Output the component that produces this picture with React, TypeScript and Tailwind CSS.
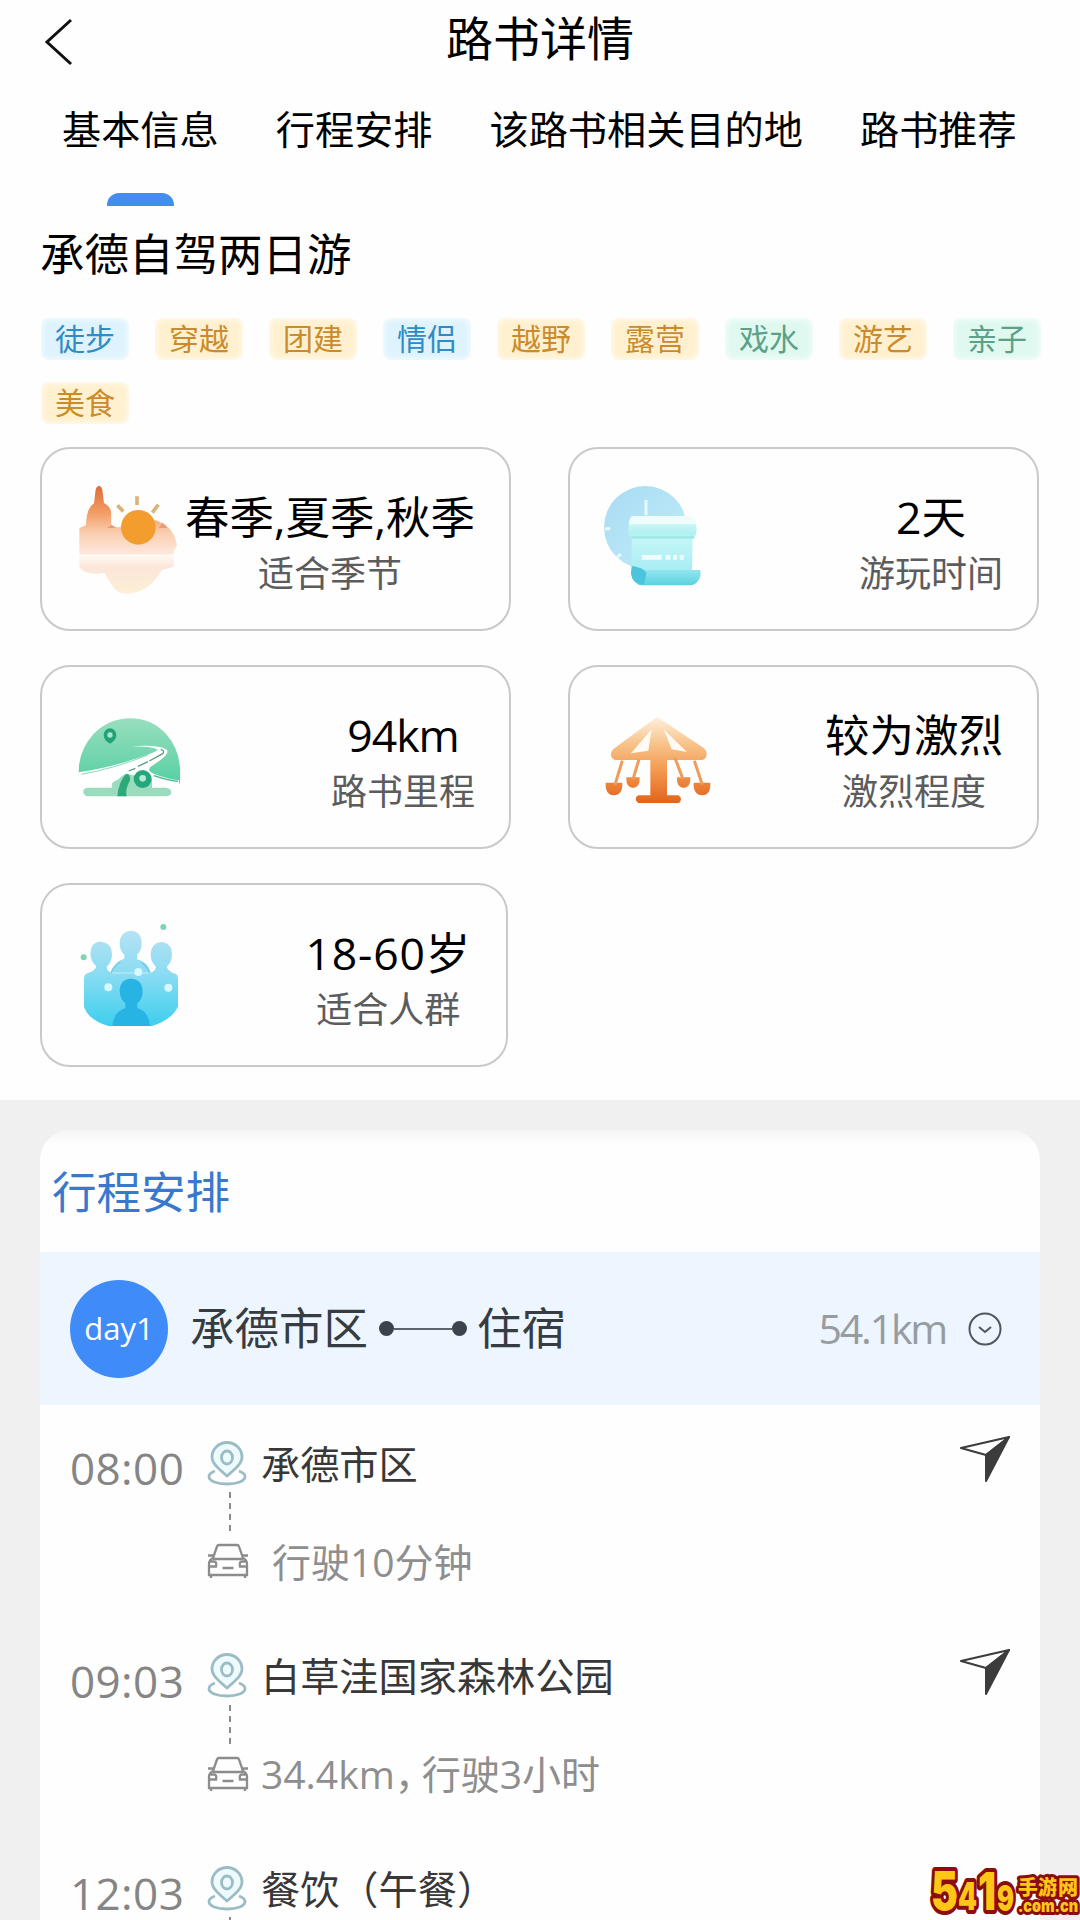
import React from "react";

const tabs = ["基本信息", "行程安排", "该路书相关目的地", "路书推荐"];

const tagColors = {
  blue: "bg-[#def3fd] text-[#2f8cc4]",
  orange: "bg-[#fff1cf] text-[#cb8b2c]",
  green: "bg-[#e0f9f0] text-[#5da088]",
};

const tags: { name: string; color: keyof typeof tagColors }[] = [
  { name: "徒步", color: "blue" },
  { name: "穿越", color: "orange" },
  { name: "团建", color: "orange" },
  { name: "情侣", color: "blue" },
  { name: "越野", color: "orange" },
  { name: "露营", color: "orange" },
  { name: "戏水", color: "green" },
  { name: "游艺", color: "orange" },
  { name: "亲子", color: "green" },
  { name: "美食", color: "orange" },
];

const SeasonIcon = () => (
  <svg width="100" height="112" viewBox="140 130 300 336">
    <defs>
      <linearGradient id="season" x1="0" y1="130" x2="0" y2="465" gradientUnits="userSpaceOnUse">
        <stop offset="0" stopColor="#dc6a35" />
        <stop offset="0.25" stopColor="#f29b62" />
        <stop offset="0.45" stopColor="#fad0b4" />
        <stop offset="0.62" stopColor="#fde6da" />
        <stop offset="0.64" stopColor="#fffaf2" />
        <stop offset="0.74" stopColor="#fbe6d8" />
        <stop offset="1" stopColor="#fdf0d6" />
      </linearGradient>
    </defs>
    <path
      d="M206 135q10 2 11 20l4 32q20 10 22 30v42h20l30-10 85-10 28 14q30 26 34 60l-10 20v45l-35 10q-30 50-65 62-60 24-85-15l-22-38q-60 8-76-18V262l20-8q0-50 24-66l4-34q1-17 11-19z"
      fill="url(#season)"
    />
    <path d="M243 200h30v60h-20q-10-12-10-28z" fill="#fffdfa" opacity="0.75" />
    <circle cx="324" cy="260" r="52" fill="#f29d2e" />
    <g stroke="#d9b577" strokeWidth="11">
      <path d="M320 167v26M384 192l-18 24M261 194l18 18" />
    </g>
    <path d="M385 262l12-16 14 16z" fill="#ea9a76" />
    <path d="M230 262l14-10 14 10z" fill="#ea9a76" />
  </svg>
);

const DurationIcon = () => (
  <svg width="100" height="104" viewBox="130 130 300 312">
    <defs>
      <linearGradient id="clock" x1="0" y1="0" x2="1" y2="1">
        <stop offset="0" stopColor="#a9daf3" />
        <stop offset="1" stopColor="#c0eff8" />
      </linearGradient>
      <linearGradient id="paper" x1="0" y1="0" x2="0" y2="1">
        <stop offset="0" stopColor="#e6fbfb" />
        <stop offset="0.3" stopColor="#b2f0f0" />
        <stop offset="0.42" stopColor="#c4f6f7" />
        <stop offset="1" stopColor="#a6ecf4" />
      </linearGradient>
      <linearGradient id="roll" x1="0" y1="0" x2="0" y2="1">
        <stop offset="0" stopColor="#b0f0f8" />
        <stop offset="1" stopColor="#5cd2e0" />
      </linearGradient>
    </defs>
    <circle cx="257" cy="260" r="124" fill="url(#clock)" />
    <path d="M259 178v46M136 264h16M172 350l12-10" stroke="#e8f9fd" strokeWidth="9" />
    <path d="M218 226h172q20 10 21 40 0 20-12 30l-2 100H216V296q-10-12-10-28 0-30 12-42z" fill="url(#paper)" />
    <path d="M218 226h172q14 6 18 24H207q2-18 11-24z" fill="#effcfc" />
    <path d="M214 290h190" stroke="#9be8e4" strokeWidth="7" />
    <path d="M246 350h60M318 350h14M340 350h12M360 350h12" stroke="#eefeff" strokeWidth="14" />
    <path d="M214 362q10 26 44 26h164q4 20-8 34-8 12-24 12H250q-30 0-36-34z" fill="url(#roll)" />
    <path d="M218 376q30 4 42 20-2 20-8 36-34-2-38-34z" fill="#4cc4dc" />
  </svg>
);

const RoadIcon = () => (
  <svg width="104" height="80" viewBox="144 168 312 240">
    <defs>
      <linearGradient id="hill" x1="0" y1="0" x2="0" y2="1">
        <stop offset="0" stopColor="#98dfbe" />
        <stop offset="1" stopColor="#57cfa2" />
      </linearGradient>
    </defs>
    <path d="M147 344q-6-70 44-126 48-46 110-46 64 0 108 48 50 56 40 148z" fill="url(#hill)" />
    <path d="M147 334q90-14 160-38 70-22 76-30-20-10-80-10 90-6 108 12 10 12-50 50-10 12 10 20 40 16 76 20v16H147z" fill="#fff" />
    <path d="M154 340q100-18 200-58" stroke="#8bd9ba" strokeWidth="3" fill="none" />
    <path d="M296 330l20-8M324 316l30-14M358 300l40-22q8-8-6-13" stroke="#5b9a82" strokeWidth="4" fill="none" />
    <path d="M372 344q40 14 72 17" stroke="#3fb88a" strokeWidth="4" fill="none" />
    <path d="M172 380h74q-6-18 18-24 20-24 42-14l60 14v24h44q14 4 14 14t-14 12H172q-12-4-12-14t12-12z" fill="#9bdcbe" />
    <path d="M288 338q14 0 12 20-16 30-10 48h-28q4-44 26-68z" fill="#2ea97a" />
    <path d="M240 248q-20-12-19-27a19 19 0 0 1 38 0q1 15-19 27z" fill="#24a277" />
    <circle cx="240" cy="222" r="8" fill="#a8e6cd" />
    <circle cx="338" cy="354" r="27" fill="#24a87b" />
    <circle cx="338" cy="352" r="10" fill="#b5ead5" />
  </svg>
);

const RideIcon = () => (
  <svg width="107" height="88" viewBox="136 166 321 264">
    <defs>
      <linearGradient id="ride" x1="0" y1="170" x2="0" y2="428" gradientUnits="userSpaceOnUse">
        <stop offset="0" stopColor="#fff0dc" />
        <stop offset="0.3" stopColor="#f8c48c" />
        <stop offset="0.6" stopColor="#f49b52" />
        <stop offset="1" stopColor="#e2631b" />
      </linearGradient>
    </defs>
    <g fill="url(#ride)">
      <path d="M276 180q17-18 34 0l122 82q12 10 8 24-4 12-14 12H168q-12-2-14-14-2-12 8-20z" />
      <path d="M272 296h50v108h34q8 4 8 12t-8 11H236q-8-4-8-12t8-11h36z" />
      <path d="M138 366h50q2 36-26 38-26-2-24-38zM200 350h40q2 30-20 32-22-2-20-32zM352 350h40q2 30-20 32-22-2-20-32zM402 366h50q2 36-24 38-28-2-26-38z" />
    </g>
    <path d="M276 206l-10 64-52 8zM312 206l70 68-46-8z" fill="#fffaf4" />
    <path d="M188 300l-22 72M238 296l-18 60M346 292l24 64M404 300l24 72" stroke="#ee9c5b" strokeWidth="9" />
  </svg>
);

const PeopleIcon = () => (
  <svg width="100" height="106" viewBox="155 154 300 318">
    <defs>
      <linearGradient id="crowd" x1="0" y1="180" x2="0" y2="466" gradientUnits="userSpaceOnUse">
        <stop offset="0" stopColor="#b6e2f4" />
        <stop offset="0.45" stopColor="#8adcf2" />
        <stop offset="1" stopColor="#3ecfee" />
      </linearGradient>
    </defs>
    <g fill="url(#crowd)">
      <path d="M307 180q32 2 33 36 0 24-14 36v14q30 6 42 40h-122q14-36 42-42v-12q-14-12-14-36 2-34 33-36z" />
      <path d="M218 214q32 2 33 36 0 26-16 38 0 14 18 20h110q18-6 20-20-16-12-16-38 2-34 31-36 32 2 33 36 0 26-16 38 4 14 28 22 6 4 6 14v84q-20 40-78 58H240q-60-18-73-58v-84q0-12 10-16 24-6 27-22-17-12-18-38 2-34 32-36z" />
    </g>
    <path d="M248 306q10-22 28-32M364 306q-8-20-24-30" stroke="#6fc9e8" strokeWidth="4" fill="none" />
    <path d="M308 324q34 2 35 38 0 24-16 36v14q34 10 38 54H253q2-42 38-54v-14q-16-12-17-36 0-36 34-38z" fill="#27b3e4" />
    <circle cx="330" cy="304" r="12" fill="#d7f8fd" />
    <circle cx="240" cy="350" r="12" fill="#d7f8fd" />
    <circle cx="420" cy="351" r="12" fill="#d7f8fd" />
    <circle cx="405" cy="169" r="9" fill="#7cd5b4" />
    <circle cx="166" cy="260" r="9" fill="#7cd5b4" />
  </svg>
);

const infos = [
  { value: "春季,夏季,秋季", label: "适合季节", Icon: SeasonIcon, iconClass: "left-[35px] top-[35px]", card: "pr-[34px]", valueClass: "" },
  { value: "2天", label: "游玩时间", Icon: DurationIcon, iconClass: "left-[33px] top-[35px]", card: "pr-[34px]", valueClass: "" },
  { value: "94km", label: "路书里程", Icon: RoadIcon, iconClass: "left-[36px] top-[50px]", card: "pr-[34px]", valueClass: "tracking-[-1px]" },
  { value: "较为激烈", label: "激烈程度", Icon: RideIcon, iconClass: "left-[35px] top-[49px]", card: "pr-[34px]", valueClass: "" },
  { value: "18-60岁", label: "适合人群", Icon: PeopleIcon, iconClass: "left-[38px] top-[37px]", card: "w-[468px] pr-[35px]", valueClass: "tracking-[0.8px]" },
];

const stops = [
  { time: "08:00", place: "承德市区", distance: "", drive: "行驶10分钟", driveClass: "pl-[23px]" },
  { time: "09:03", place: "白草洼国家森林公园", distance: "34.4km，", drive: "行驶3小时", driveClass: "pl-[12px]" },
  { time: "12:03", place: "餐饮（午餐）", distance: "", drive: "", driveClass: "" },
];

const PinIcon = () => (
  <svg width="40" height="46" viewBox="0 0 40 46" fill="none" stroke="#9bbcc5" strokeWidth="2.8" className="shrink-0">
    <path d="M20 35C13 29 5 23 5 16a15 14.5 0 0 1 30 0c0 7-8 13-15 19z" fill="#edfbfd" />
    <ellipse cx="20" cy="16.5" rx="5.5" ry="6.5" />
    <path d="M8 30c-4 1.500-6 3-6 5.500C2 40 10 43 20 43s18-3 18-7.500c0-2.500-2-4-6-5.500" />
  </svg>
);

const CarIcon = () => (
  <svg width="42" height="36" viewBox="0 0 42 36" fill="none" stroke="#8c8c8c" strokeWidth="2.300" className="shrink-0">
    <path d="M6 15L10 3.500Q10.500 2 12 2h18q1.500 0 2 1.500L36 15M6 16h30M1 12.500h5M36 12.500h5" />
    <path d="M6 15q-4 2-4 6v11h38V21q0-4-4-6M2 18.500h5q3 0 2 5H2M40 18.500h-5q-3 0-2 5h7M4 32v3M38 32v3M15.500 25h11" />
  </svg>
);

const NavIcon = () => (
  <svg width="54" height="50" viewBox="0 0 54 50" strokeLinejoin="round" className="mt-px">
    <path d="M3 14L51 3 28 21z" fill="#fff" stroke="#3c3c3c" strokeWidth="2.200" />
    <path d="M51 3L28 21v26z" fill="#3c3c3c" stroke="#3c3c3c" strokeWidth="2" />
  </svg>
);

const SiteLogo = () => (
  <svg
    width="154"
    height="58"
    viewBox="-4 -2 154 58"
    className="absolute right-0 bottom-0 font-black"
    fill="#ffc615"
    stroke="#8c0d0d"
    strokeLinejoin="round"
    paintOrder="stroke"
  >
    <g strokeWidth="8" fontFamily="Inter">
      <text x="1" y="46" fontSize="54" textLength="27" lengthAdjust="spacingAndGlyphs">5</text>
      <text x="28" y="46" fontSize="38" textLength="19" lengthAdjust="spacingAndGlyphs">4</text>
      <text x="48" y="46" fontSize="52" textLength="18" lengthAdjust="spacingAndGlyphs">1</text>
      <text x="67" y="47" fontSize="36" textLength="17" lengthAdjust="spacingAndGlyphs">9</text>
    </g>
    <text x="88" y="31" fontSize="20" strokeWidth="6" textLength="60" fontFamily="Noto Sans CJK SC">手游网</text>
    <text x="88" y="48" fontSize="17" strokeWidth="6" textLength="60" lengthAdjust="spacingAndGlyphs" fontFamily="Inter">.com.cn</text>
  </svg>
);

const App = () => {
  return (
    <main className="relative w-[1080px] h-[1920px] overflow-hidden bg-[#fefefe] text-black font-['Open_Sans','Noto_Sans_CJK_SC',sans-serif]">
      {/* header */}
      <header className="relative flex h-[78px] items-center justify-center">
        <svg width="32" height="50" viewBox="0 0 32 50" fill="none" stroke="#111" strokeWidth="3" className="absolute left-[43px] top-[17px]">
          <path d="M28 3L4 25l24 22" />
        </svg>
        <h1 className="text-[47px] leading-none -mt-px">路书详情</h1>
      </header>

      {/* tabs */}
      <nav className="flex gap-[57px] pl-[62px]">
        {tabs.map((tab, index) => (
          <div key={tab} className="flex flex-col items-center">
            <span className="text-[39.2px] leading-[102px] h-[115px] whitespace-nowrap">{tab}</span>
            {index === 0 && <div className="h-[13px] w-[67px] rounded-t-[12px] bg-[#468cf0]" />}
          </div>
        ))}
      </nav>

      <h2 className="pl-[40px] text-[44.5px] leading-[95px] h-[94px]">承德自驾两日游</h2>

      {/* tags */}
      <div className="mt-[18px] ml-[41px] w-[1000px] flex flex-wrap gap-x-[26px] gap-y-[22px]">
        {tags.map((tag) => (
          <span
            key={tag.name}
            className={`w-[88px] h-[42px] rounded-lg text-center text-[30px] leading-[41px] shadow-[inset_0_0_7px_#fefefe] ${tagColors[tag.color]}`}
          >
            {tag.name}
          </span>
        ))}
      </div>

      {/* basic info cards */}
      <section className="mt-[23px] px-[40px] grid grid-cols-[471px_471px] gap-x-[57px] gap-y-[34px]">
        {infos.map(({ value, label, Icon, iconClass, card, valueClass }) => (
          <div
            key={label}
            className={`relative flex h-[184px] items-center justify-end rounded-[30px] border-2 border-[#c9c9c9] ${card}`}
          >
            <div className={`absolute ${iconClass}`}>
              <Icon />
            </div>
            <div className="pt-[9px] text-center whitespace-nowrap">
              <p className={`text-[44.5px] leading-[60px] ${valueClass}`}>{value}</p>
              <p className="text-[36px] leading-[53px] text-[#5c5c5c]">{label}</p>
            </div>
          </div>
        ))}
      </section>

      {/* schedule */}
      <section className="mt-[33px] h-[820px] bg-[#f0f0f0] pt-[30px] px-[40px]">
        <div className="h-[790px] rounded-t-[30px] bg-linear-to-b from-[#f5f5f5] to-[#fefefe] to-[14px]">
          <h3 className="h-[122px] pl-[12px] text-[44.5px] leading-[124px] text-[#3a78cd]">行程安排</h3>

          <div className="flex h-[153px] items-center bg-[#edf6fe] pl-[30px] pr-[38px] text-[#363c42]">
            <div className="flex size-[98px] items-center justify-center rounded-full bg-[#3f8bf8] text-[31px] leading-none text-white">
              day1
            </div>
            <span className="ml-[22px] text-[44.5px] leading-none">承德市区</span>
            <div className="ml-[11px] flex items-center">
              <i className="size-[15px] rounded-full bg-[#3b434b]" />
              <i className="h-[2px] w-[58px] bg-[#5d646b]" />
              <i className="size-[15px] rounded-full bg-[#3b434b]" />
            </div>
            <span className="ml-[10px] text-[44.5px] leading-none">住宿</span>
            <span className="ml-auto text-[41px] leading-none tracking-[-2.2px] text-[#979ca1]">54.1km</span>
            <svg width="34" height="34" viewBox="0 0 34 34" fill="none" stroke="#50565c" strokeWidth="2" className="ml-[22px]">
              <circle cx="17" cy="17" r="15.5" />
              <path d="M11 15l6 5 6-5" />
            </svg>
          </div>

          {stops.map((stop) => (
            <div key={stop.time} className="flex h-[212.500px] items-start pl-[30px] pr-[28px] pt-[28px]">
              <div className="mt-[10px] w-[137px] text-[44px] leading-[50px] tracking-[0.4px] text-[#858585]">{stop.time}</div>
              <div className="flex-1">
                <div className="flex h-[58px] items-center pt-[3px]">
                  <PinIcon />
                  <span className="ml-[14px] text-[39.2px] leading-none whitespace-nowrap text-[#383838]">{stop.place}</span>
                </div>
                <svg width="4" height="45" className="ml-[21px]" stroke="#8a8a8a" strokeWidth="2" strokeDasharray="6 5">
                  <path d="M2 1v44" />
                </svg>
                {stop.drive && (
                  <div className="flex h-[50px] items-center">
                    <CarIcon />
                    <p className={`text-[39px] leading-none whitespace-nowrap text-[#8e8e8e] ${stop.driveClass}`}>
                      {stop.distance && <span className="mr-[-12px]">{stop.distance}</span>}
                      {stop.drive}
                    </p>
                  </div>
                )}
              </div>
              {stop.drive && <NavIcon />}
            </div>
          ))}
        </div>
      </section>

      <SiteLogo />
    </main>
  );
};

export default App;
